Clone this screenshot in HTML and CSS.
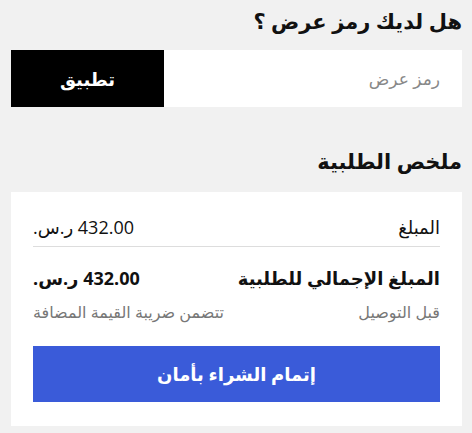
FILE: index.html
```html
<!DOCTYPE html>
<html lang="ar" dir="rtl">
<head>
  <meta charset="UTF-8">
  <meta name="viewport" content="width=device-width, initial-scale=1.0">
  <title>ملخص الطلبية</title>
  <link rel="stylesheet" href="styles.css">
</head>
<body>
  <section class="promo">
    <h2 class="section-title">هل لديك رمز عرض ؟</h2>
    <form class="promo-form" onsubmit="return false">
      <input class="promo-input" type="text" placeholder="رمز عرض">
      <button class="apply-btn" type="submit">تطبيق</button>
    </form>
  </section>

  <section class="summary">
    <h2 class="section-title">ملخص الطلبية</h2>
    <div class="summary-card">
      <div class="summary-row subtotal">
        <span>المبلغ</span>
        <span>432.00 ر.س.</span>
      </div>
      <div class="summary-row total">
        <span>المبلغ الإجمالي للطلبية</span>
        <span>432.00 ر.س.</span>
      </div>
      <div class="summary-row note">
        <span>قبل التوصيل</span>
        <span>تتضمن ضريبة القيمة المضافة</span>
      </div>
      <button class="checkout-btn">إتمام الشراء بأمان</button>
    </div>
  </section>
</body>
</html>
```

FILE: styles.css
```css
/* General Styling */
body, html {
  margin: 0;
  padding: 0;
}
body {
  padding: 6px 10px 0 11px;
  background: #f1f1f1;
  color: #111;
  font-family: "Open Sans", "DejaVu Sans", sans-serif;
  font-size: 18px;
  direction: rtl;
}
.section-title {
  margin: 0;
  font-size: 21px;
  font-weight: bold;
  line-height: 30px;
}

/* Promo code */
.promo-form {
  display: flex;
  height: 57px;
  margin-top: 14px;
}
.promo-input {
  flex-grow: 1;
  border: none;
  background: white;
  padding: 0 22px;
  font-family: inherit;
  font-size: 17px;
  direction: rtl;
  outline: none;
}
.promo-input::placeholder {
  color: #888;
}
.apply-btn {
  width: 153px;
  border: none;
  background: black;
  color: white;
  font-family: inherit;
  font-size: 18px;
  font-weight: bold;
  cursor: pointer;
}

/* Order summary */
.summary {
  margin-top: 39px;
}
.summary-card {
  background: white;
  margin-top: 16px;
  padding: 16px 22px 24px;
}
.summary-row {
  display: flex;
  justify-content: space-between;
  align-items: center;
}
.subtotal {
  height: 38px;
  border-bottom: 1px solid #ddd;
}
.total {
  margin-top: 18px;
  font-weight: bold;
  font-size: 18px;
  line-height: 26px;
}
.note {
  margin-top: 10px;
  color: #777;
  font-size: 16px;
  line-height: 22px;
}
.checkout-btn {
  display: block;
  width: 100%;
  height: 56px;
  margin-top: 23px;
  border: none;
  background: #3a5bd9;
  color: white;
  font-family: inherit;
  font-size: 18px;
  font-weight: bold;
  cursor: pointer;
}
```
